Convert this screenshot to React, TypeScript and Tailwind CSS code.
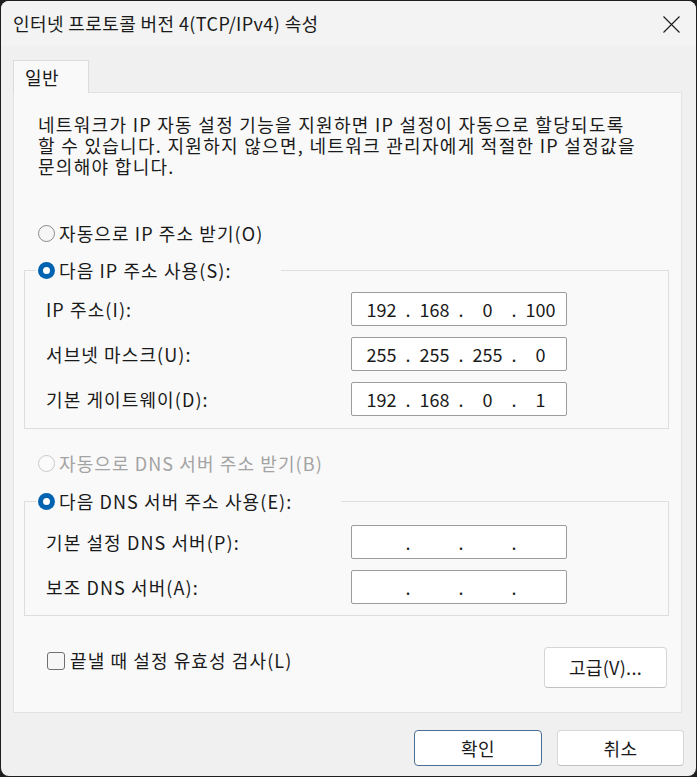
import React from "react";

const FONT = "font-['Noto_Sans_CJK_KR','Noto_Sans',sans-serif]";
const T = "text-[18px] leading-[21px] tracking-[1.1px] whitespace-nowrap";
const TD = "text-[18px] leading-[21px] tracking-[1.3px] whitespace-nowrap";

function Radio({ checked, disabled }: { checked?: boolean; disabled?: boolean }) {
  if (checked) {
    return (
      <span className="w-[17px] h-[17px] rounded-full bg-[#0063b1] flex items-center justify-center shrink-0">
        <span className="w-[7px] h-[7px] rounded-full bg-white" />
      </span>
    );
  }
  return (
    <span
      className={
        disabled
          ? "w-[17px] h-[17px] rounded-full border border-[#c9c9c9] bg-[#fbfbfb] shrink-0"
          : "w-[17px] h-[17px] rounded-full border border-[#8a8a8a] bg-[#f6f6f6] shrink-0"
      }
    />
  );
}

function IpBox({ parts }: { parts: string[] }) {
  return (
    <div className="w-[216px] h-[34px] border border-[#9c9c9c] rounded-[2px] bg-white flex items-center pl-[6px] text-[18px] text-[#1a1a1a] leading-none">
      {parts.map((p, i) => (
        <React.Fragment key={i}>
          <span className="w-[47px] text-center">{p}</span>
          {i < 3 && <span className="w-[6px] text-center">.</span>}
        </React.Fragment>
      ))}
    </div>
  );
}

function FieldRow({ label, parts }: { label: string; parts: string[] }) {
  return (
    <div className="flex items-center">
      <span className={`w-[305px] ${T}`}>{label}</span>
      <IpBox parts={parts} />
    </div>
  );
}

export default function App() {
  return (
    <div className={`w-[697px] h-[777px] bg-[#1e1e1e] p-px ${FONT} text-[#1a1a1a]`}>
      <div className="h-full w-full rounded-[8px] bg-[#f0f0f0] flex flex-col overflow-hidden">
        {/* Title bar */}
        <div className="h-[45px] bg-[#f3f3f3] flex items-center justify-between pl-3 pr-[16px] shrink-0">
          <span className="text-[18px] leading-[21px] tracking-[0.4px] text-[#1a1a1a]">인터넷 프로토콜 버전 4(TCP/IPv4) 속성</span>
          <svg width="17" height="17" viewBox="0 0 17 17" className="mt-[1px]">
            <path d="M0.5 0.5 L16.5 16.5 M16.5 0.5 L0.5 16.5" stroke="#1a1a1a" strokeWidth="1.1" fill="none" />
          </svg>
        </div>

        {/* Body */}
        <div className="pl-3 pt-[14px] flex flex-col">
          {/* Tab */}
          <div className="relative z-10 -mb-px w-[76px] h-[33px] bg-[#f9f9f9] border border-b-0 border-[#dcdcdc] pl-[11px] flex items-center">
            <span className="text-[18px] leading-[21px] tracking-[0.5px]">일반</span>
          </div>
          {/* Panel */}
          <div className="w-[669px] h-[621px] bg-[#f9f9f9] border border-[#e3e3e3] flex flex-col">
            <div className="pl-6 pt-[21px] flex flex-col">
              <span className={TD}>네트워크가 IP 자동 설정 기능을 지원하면 IP 설정이 자동으로 할당되도록</span>
              <span className={TD}>할 수 있습니다. 지원하지 않으면, 네트워크 관리자에게 적절한 IP 설정값을</span>
              <span className={TD}>문의해야 합니다.</span>
            </div>

            <div className="ml-6 mt-[46px] flex items-center gap-[4px] h-[21px]">
              <Radio />
              <span className={T}>자동으로 IP 주소 받기(O)</span>
            </div>

            {/* IP group */}
            <div className="relative ml-[10px] mr-[12px] mt-[26px] border border-[#dedede] pt-[21px] pb-[12px] pl-[21px] flex flex-col gap-[11px]">
              <div className="absolute -top-[11px] left-[11px] h-[21px] bg-[#f9f9f9] pl-[2px] pr-[49px] flex items-center gap-[4px]">
                <Radio checked />
                <span className={T}>다음 IP 주소 사용(S):</span>
              </div>
              <FieldRow label="IP 주소(I):" parts={["192", "168", "0", "100"]} />
              <FieldRow label="서브넷 마스크(U):" parts={["255", "255", "255", "0"]} />
              <FieldRow label="기본 게이트웨이(D):" parts={["192", "168", "0", "1"]} />
            </div>

            <div className="ml-6 mt-[24px] flex items-center gap-[4px] h-[21px]">
              <Radio disabled />
              <span className={`${T} text-[#a3a3a3]`}>자동으로 DNS 서버 주소 받기(B)</span>
            </div>

            {/* DNS group */}
            <div className="relative ml-[10px] mr-[12px] mt-[27px] border border-[#dedede] pt-[23px] pb-[11px] pl-[21px] flex flex-col gap-[11px]">
              <div className="absolute -top-[11px] left-[11px] h-[21px] bg-[#f9f9f9] pl-[2px] pr-[49px] flex items-center gap-[4px]">
                <Radio checked />
                <span className={T}>다음 DNS 서버 주소 사용(E):</span>
              </div>
              <FieldRow label="기본 설정 DNS 서버(P):" parts={["", "", "", ""]} />
              <FieldRow label="보조 DNS 서버(A):" parts={["", "", "", ""]} />
            </div>

            {/* Bottom row */}
            <div className="mt-[31px] flex items-start justify-between pl-[33px] pr-[14px]">
              <div className="mt-[3px] flex items-center gap-[5px] h-[21px]">
                <span className="w-[18px] h-[18px] rounded-[3px] border border-[#6f6f6f] bg-[#f6f6f6] shrink-0" />
                <span className={T}>끝낼 때 설정 유효성 검사(L)</span>
              </div>
              <button className="w-[123px] h-[41px] rounded-[4px] bg-white border border-[#d6d6d6] border-b-[#c2c2c2] text-[18px] leading-[21px] tracking-[0.3px] text-[#1a1a1a]">
                고급(V)...
              </button>
            </div>
          </div>
        </div>

        {/* Footer */}
        <div className="mt-[17px] flex justify-end gap-[15px] pr-3">
          <button className="w-[128px] h-[36px] rounded-[4px] bg-white border border-[#4a6f95] text-[18px] leading-[21px] tracking-[0.5px] text-[#1a1a1a]">
            확인
          </button>
          <button className="w-[127px] h-[36px] rounded-[4px] bg-white border border-[#d6d6d6] border-b-[#c2c2c2] text-[18px] leading-[21px] tracking-[0.5px] text-[#1a1a1a]">
            취소
          </button>
        </div>
      </div>
    </div>
  );
}
